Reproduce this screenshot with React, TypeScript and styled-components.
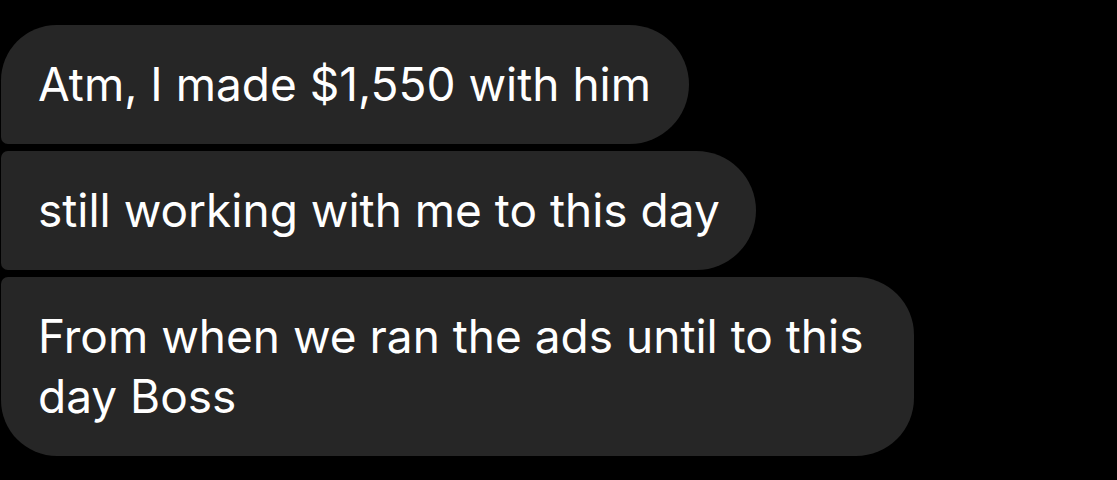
import React from "react";
import styled, { createGlobalStyle } from "styled-components";

const GlobalStyle = createGlobalStyle`
  html, body {
    margin: 0;
    padding: 0;
    background: #000;
  }
`;

const Thread = styled.div`
  width: 1117px;
  height: 480px;
  background: #000;
  display: flex;
  flex-direction: column;
  align-items: flex-start;
  gap: 7px;
  padding: 25px 0 0 1px;
  box-sizing: border-box;
  font-family: Inter, "Liberation Sans", sans-serif;
`;

type Position = "first" | "middle" | "last";

const radii: Record<Position, string> = {
  first: "56px 60px 60px 7px",
  middle: "7px 60px 60px 7px",
  last: "7px 58px 58px 56px",
};

const rightPad: Record<Position, number> = {
  first: 38,
  middle: 36,
  last: 51,
};

const Bubble = styled.div<{ $pos: Position }>`
  background: #262626;
  color: #fff;
  font-size: 46px;
  line-height: 60px;
  letter-spacing: 0;
  padding: 29px ${(p) => rightPad[p.$pos]}px 30px 37px;
  border-radius: ${(p) => radii[p.$pos]};
`;

export default function App() {
  return (
    <>
      <GlobalStyle />
      <Thread>
        <Bubble $pos="first">Atm, I made $1,550 with him</Bubble>
        <Bubble $pos="middle">still working with me to this day</Bubble>
        <Bubble $pos="last">
          From when we ran the ads until to this
          <br />
          day Boss
        </Bubble>
      </Thread>
    </>
  );
}
